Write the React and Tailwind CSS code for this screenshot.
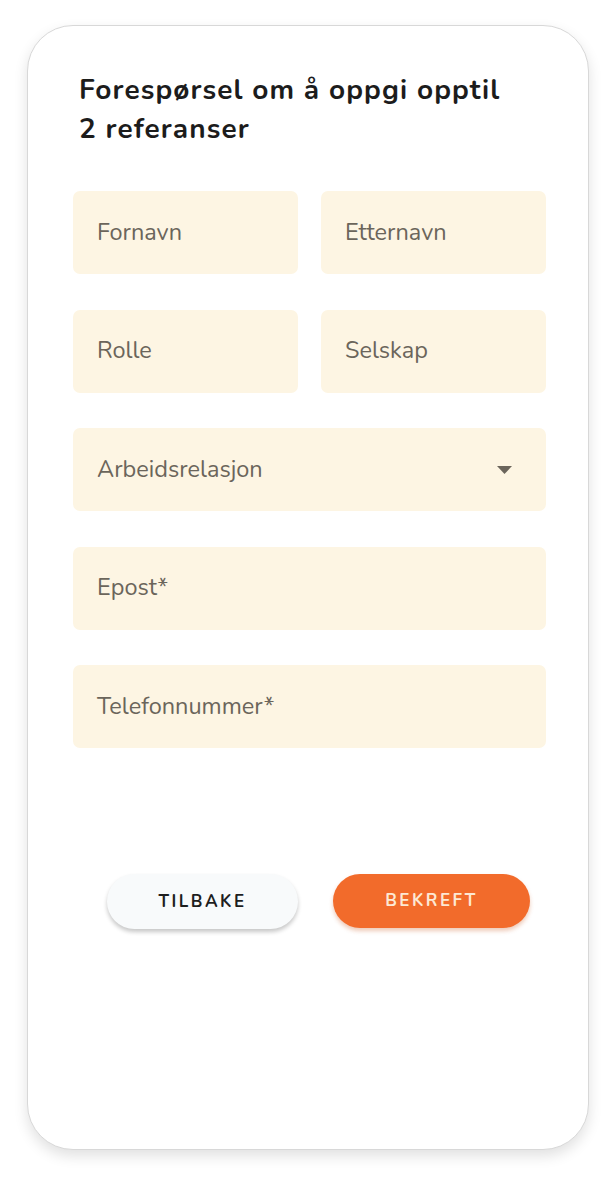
import React from "react";

const Field = ({ label, children }) => (
  <div className="h-[83px] rounded-[7px] bg-[#fdf5e3] flex items-center justify-between pl-[24px] pr-[34px] text-[23.5px] text-[#6b655b]">
    <span>{label}</span>
    {children}
  </div>
);

export default function App() {
  return (
    <div className="min-h-[1179px] bg-white pt-[25px] pl-[27px]" style={{ fontFamily: "Nunito, 'Noto Sans', 'Open Sans', sans-serif" }}>
      <div className="w-[562px] h-[1125px] rounded-[46px] bg-white border border-[#d8d8d8] shadow-[0_6px_14px_rgba(0,0,0,0.12)] pt-[45px] pr-[42px] pl-[45px]">
        <h1 className="pl-[6px] text-[28px] leading-[39px] font-bold tracking-[1.1px] text-[#1c1c1c]">
          Forespørsel om å oppgi opptil
          <br />2 referanser
        </h1>
        <div className="mt-[42px] flex flex-col gap-[35.5px]">
          <div className="grid grid-cols-2 gap-[23px]">
            <Field label="Fornavn" />
            <Field label="Etternavn" />
          </div>
          <div className="grid grid-cols-2 gap-[23px]">
            <Field label="Rolle" />
            <Field label="Selskap" />
          </div>
          <Field label="Arbeidsrelasjon">
            <svg width="15" height="8" viewBox="0 0 15 8">
              <path d="M0 0 L15 0 L7.5 8 Z" fill="#6b655b" />
            </svg>
          </Field>
          <Field label="Epost*" />
          <Field label="Telefonnummer*" />
        </div>
        <div className="mt-[126px] flex justify-center gap-[35px] pl-[18px]">
          <button className="w-[191px] h-[55px] rounded-full bg-[#f8fafb] shadow-[0_3px_4px_rgba(0,0,0,0.22)] text-[17px] font-bold tracking-[2.5px] text-[#1e1e1e]">
            TILBAKE
          </button>
          <button className="w-[197px] h-[54px] rounded-full bg-[#f26b2b] shadow-[0_3px_4px_rgba(200,80,20,0.3)] text-[17px] font-bold tracking-[2.5px] text-[#fde8d4]">
            BEKREFT
          </button>
        </div>
      </div>
    </div>
  );
}
